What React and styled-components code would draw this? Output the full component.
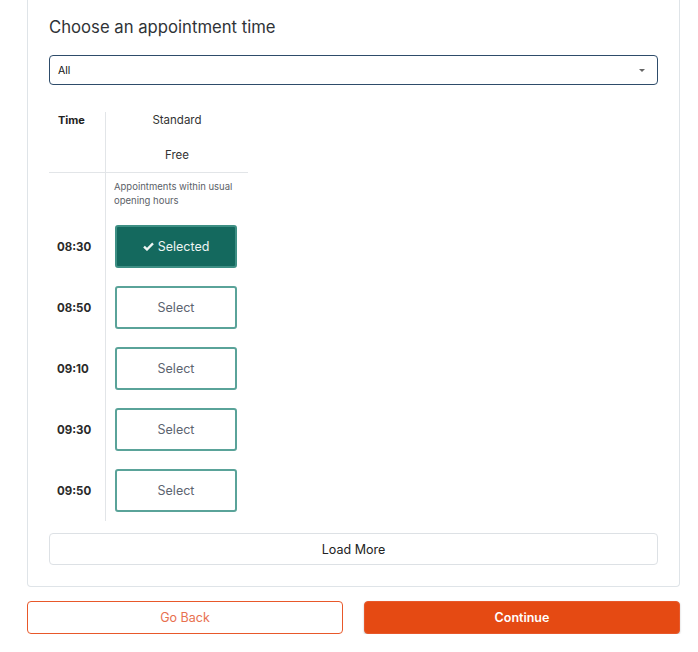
import React, { useState } from 'react';
import styled, { createGlobalStyle } from 'styled-components';

const Global = createGlobalStyle`
    body {
        margin: 0;
        background: #fff;
        font-family: Inter, "Noto Sans", "Liberation Sans", sans-serif;
        color: #333;
    }
`;

const Page = styled.div`
    width: 653px;
    margin-left: 27px;
`;

const Card = styled.section`
    border: 1px solid #dfe4e8;
    border-top: none;
    border-radius: 0 0 4px 4px;
    padding: 16px 21px 21px 21px;
`;

const Title = styled.h2`
    margin: 0;
    font-size: 16.7px;
    line-height: 22px;
    font-weight: 400;
    color: #2f3337;
`;

const SelectBox = styled.div`
    margin-top: 17px;
    height: 30px;
    box-sizing: border-box;
    border: 1.5px solid #2e4c6a;
    border-radius: 4px;
    display: flex;
    align-items: center;
    justify-content: space-between;
    padding: 0 12px 0 8px;
    font-size: 10.5px;
    color: #111;

    .caret {
        width: 0;
        height: 0;
        border-left: 3.5px solid transparent;
        border-right: 3.5px solid transparent;
        border-top: 3.5px solid #666;
    }
`;

const Table = styled.div`
    margin-top: 27px;
    display: grid;
    grid-template-columns: 56px 143px;
`;

const TimeHead = styled.div`
    font-size: 11px;
    font-weight: 700;
    line-height: 16px;
    padding-left: 9px;
    color: #222;
`;

const Cell = styled.div`
    border-left: 1px solid #e2e5e8;
    ${p => p.$divider && 'border-bottom: 1px solid #e2e5e8;'}
`;

const Corner = styled.div`
    border-bottom: 1px solid #e2e5e8;
`;

const ColHead = styled(Cell)`
    text-align: center;
    font-size: 11.5px;
    line-height: 16px;
    color: #333;
    padding-bottom: 9px;

    .sub {
        margin-top: 19px;
    }
`;

const Note = styled(Cell)`
    font-size: 9.5px;
    line-height: 14px;
    color: #5b6168;
    padding: 7px 8px 8px 8px;
`;

const TimeLabel = styled.div`
    height: 61px;
    display: flex;
    align-items: center;
    padding-left: 8px;
    font-size: 11.5px;
    font-weight: 700;
    color: #2a2a2a;
`;

const SlotCell = styled(Cell)`
    height: 61px;
    display: flex;
    align-items: center;
    padding-left: 9px;
`;

const SlotButton = styled.button`
    width: 122px;
    height: 43px;
    border-radius: 3px;
    border: 2px solid ${p => (p.$active ? '#3e8f84' : '#5aa399')};
    background: ${p => (p.$active ? '#14695e' : '#fff')};
    color: ${p => (p.$active ? '#eef5f3' : '#5c6470')};
    font-family: inherit;
    font-size: 12.5px;
    display: flex;
    align-items: center;
    justify-content: center;
    gap: 4px;
    cursor: pointer;
`;

const LoadMore = styled.button`
    margin-top: 12px;
    width: 100%;
    height: 32px;
    border: 1px solid #dde1e5;
    border-radius: 4px;
    background: #fff;
    font-family: inherit;
    font-size: 12.5px;
    color: #222;
`;

const Actions = styled.div`
    margin-top: 14px;
    display: grid;
    grid-template-columns: 1fr 1fr;
    column-gap: 21px;
`;

const ActionButton = styled.button`
    height: 33px;
    border-radius: 4px;
    font-family: inherit;
    font-size: 12.5px;
    border: 1px solid #e8582a;
    background: ${p => (p.$primary ? '#e54a13' : '#fff')};
    color: ${p => (p.$primary ? '#fff' : '#e8704f')};
    font-weight: ${p => (p.$primary ? 600 : 400)};
    box-shadow: ${p => (p.$primary ? '0 1px 2px rgba(0,0,0,0.25)' : 'none')};
`;

const Check = () => (
    <svg width="11" height="9" viewBox="0 0 12 10">
        <path d="M1 5.2 L4.3 8.3 L11 1.6" fill="none" stroke="currentColor" strokeWidth="2.6" />
    </svg>
);

const times = ['08:30', '08:50', '09:10', '09:30', '09:50'];

export default function App() {
    const [picked, setPicked] = useState('08:30');

    return (
        <Page>
            <Global />
            <Card>
                <Title>Choose an appointment time</Title>
                <SelectBox>
                    <span>All</span>
                    <span className="caret" />
                </SelectBox>
                <Table>
                    <Corner><TimeHead>Time</TimeHead></Corner>
                    <ColHead $divider>
                        <div>Standard</div>
                        <div className="sub">Free</div>
                    </ColHead>
                    <div />
                    <Note>Appointments within usual opening hours</Note>
                    {times.map(t => (
                        <React.Fragment key={t}>
                            <TimeLabel>{t}</TimeLabel>
                            <SlotCell>
                                <SlotButton $active={picked === t} onClick={() => setPicked(t)}>
                                    {picked === t && <Check />}
                                    {picked === t ? 'Selected' : 'Select'}
                                </SlotButton>
                            </SlotCell>
                        </React.Fragment>
                    ))}
                </Table>
                <LoadMore>Load More</LoadMore>
            </Card>
            <Actions>
                <ActionButton>Go Back</ActionButton>
                <ActionButton $primary>Continue</ActionButton>
            </Actions>
        </Page>
    );
}
